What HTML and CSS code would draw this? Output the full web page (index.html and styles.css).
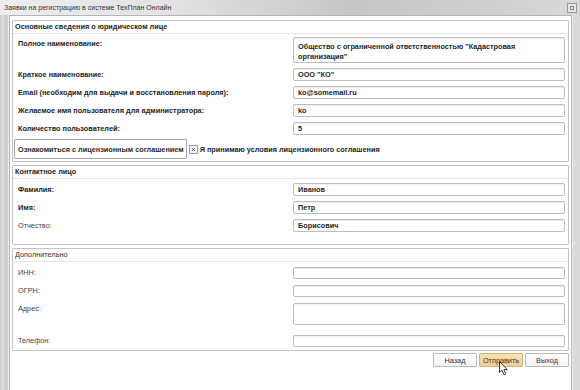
FILE: index.html
```html
<!DOCTYPE html>
<html lang="ru">
<head>
  <meta charset="UTF-8">
  <title>Заявки на регистрацию в системе ТехПлан Онлайн</title>
  <link rel="stylesheet" href="styles.css">
</head>
<body>
  <div class="window">
    <div class="titlebar">
      <span class="title">Заявки на регистрацию в системе ТехПлан Онлайн</span>
      <span class="tb-button"><span class="tb-button-inner"></span></span>
    </div>

    <div class="client">
      <!-- Основные сведения -->
      <section class="fs">
        <div class="fs-head">Основные сведения о юридическом лице</div>
        <div class="fs-body fs-body-main">
          <label class="lbl">Полное наименование:</label>
          <textarea class="field field-area" rows="2">Общество с ограниченной ответственностью "Кадастровая организация"</textarea>

          <label class="lbl">Краткое наименование:</label>
          <input class="field" type="text" value='ООО "КО"'>

          <label class="lbl">Email (необходим для выдачи и восстановления пароля):</label>
          <input class="field" type="text" value="ko@somemail.ru">

          <label class="lbl">Желаемое имя пользователя для администратора:</label>
          <input class="field" type="text" value="ko">

          <label class="lbl">Количество пользователей:</label>
          <input class="field" type="text" value="5">
        </div>
        <div class="license">
          <button class="license-button">Ознакомиться с лицензионным соглашением</button>
          <span class="check">
            <svg viewBox="0 0 9 9" width="9" height="9">
              <path d="M2.5 2.5L6.5 6.5M6.5 2.5L2.5 6.5" stroke="#555" stroke-width="1.1" fill="none"/>
            </svg>
          </span>
          <span class="check-label">Я принимаю условия лицензионного соглашения</span>
        </div>
      </section>

      <!-- Контактное лицо -->
      <section class="fs">
        <div class="fs-head">Контактное лицо</div>
        <div class="fs-body fs-body-contact">
          <label class="lbl">Фамилия:</label>
          <input class="field" type="text" value="Иванов">

          <label class="lbl">Имя:</label>
          <input class="field" type="text" value="Петр">

          <label class="lbl lbl-plain">Отчество:</label>
          <input class="field" type="text" value="Борисович">
        </div>
      </section>

      <!-- Дополнительно -->
      <section class="fs fs-last">
        <div class="fs-head fs-head-plain">Дополнительно</div>
        <div class="fs-body fs-body-extra">
          <label class="lbl lbl-plain">ИНН:</label>
          <input class="field field-small" type="text" value="">

          <label class="lbl lbl-plain">ОГРН:</label>
          <input class="field field-small" type="text" value="">

          <label class="lbl lbl-plain">Адрес:</label>
          <textarea class="field field-address"></textarea>

          <label class="lbl lbl-plain row-phone">Телефон:</label>
          <input class="field field-small row-phone" type="text" value="">
        </div>
      </section>

      <div class="actions">
        <button class="btn">Назад</button>
        <button class="btn btn-hover">Отправить</button>
        <button class="btn">Выход</button>
      </div>
    </div>

    <!-- курсор над кнопкой -->
    <svg class="cursor" viewBox="0 0 10 15" width="10" height="15">
      <path d="M0.5 0.5L0.5 11.5L3 9.2L5 13.8L6.8 13L4.9 8.6L8.3 8.6Z" fill="#fff" stroke="#222" stroke-width="0.9" stroke-linejoin="round"/>
    </svg>
  </div>
</body>
</html>
```

FILE: styles.css
```css
/* Базовые стили */
* {
  margin: 0;
  padding: 0;
  box-sizing: border-box;
}

body {
  font-family: "Liberation Sans", Arial, sans-serif;
  font-size: 7.3px;
  color: #222222;
  background-color: #d6d6d6;
}

/* Окно */
.window {
  position: relative;
  width: 580px;
  height: 390px;
  display: flex;
  flex-direction: column;
  background: linear-gradient(to right, #cfcfcf 0, #dedede 3px, #c9c9c9 6px, #d9d9d9 9px);
  overflow: hidden;
}

.titlebar {
  height: 15px;
  display: flex;
  align-items: center;
  justify-content: space-between;
  padding: 0 3px 0 4px;
  background: linear-gradient(to right, #eeeeee 0%, #e2e2e2 30%, #c6c6c6 60%, #cfcfcf 85%, #d8d8d8 100%);
}

.title {
  font-size: 7px;
  color: #333333;
}

.tb-button {
  width: 10px;
  height: 10px;
  border: 1px solid #9a9a9a;
  background: #e4e4e4;
  display: flex;
  align-items: center;
  justify-content: center;
}

.tb-button-inner {
  width: 4px;
  height: 4px;
  border: 1px solid #8a8a8a;
}

.client {
  flex: 1;
  margin: 0 8px 0 9px;
  padding: 4px 2px 0 2px;
  background-color: #ffffff;
  border: 1px solid #b5b5b5;
  border-bottom: none;
  box-shadow: 1px 0 0 #ededed, -1px 0 0 #ededed;
}

/* Группы полей */
.fs {
  border: 1px solid #c4c4c4;
  border-radius: 1px;
  margin-bottom: 3px;
}

.fs-last {
  margin-bottom: 2px;
}

.fs-head {
  height: 13px;
  line-height: 12px;
  padding-left: 2px;
  font-weight: bold;
  color: #1e1e1e;
  border-bottom: 1px solid #e6e6e6;
}

.fs-head-plain {
  font-weight: normal;
  color: #333333;
}

.fs-body {
  display: grid;
  grid-template-columns: 275px 1fr;
  padding: 3px 3px 2px 5px;
}

.fs-body-main {
  row-gap: 5px;
}

.fs-body-contact {
  row-gap: 5px;
  padding-top: 4px;
  padding-bottom: 12px;
}

.fs-body-extra {
  row-gap: 6px;
  padding-top: 5px;
  padding-bottom: 3px;
}

.lbl {
  font-weight: bold;
  line-height: 13px;
  color: #1e1e1e;
  align-self: start;
}

.lbl-plain {
  font-weight: normal;
  color: #444444;
}

.fs-body-extra .lbl {
  line-height: 12px;
}

.row-phone {
  margin-top: 4px;
}

/* Поля ввода */
.field {
  display: block;
  width: 100%;
  height: 13px;
  padding: 0 4px;
  font-family: inherit;
  font-size: 7.3px;
  font-weight: bold;
  color: #1e1e1e;
  background-color: #ffffff;
  border: 1px solid #bdbdbd;
  border-radius: 2px;
  box-shadow: inset 0 1px 0 #f0f0f0;
  outline: none;
}

.field-small {
  height: 12px;
}

.field-area {
  height: 26px;
  padding: 4px 4px 0;
  line-height: 10px;
  resize: none;
  overflow: hidden;
}

.field-address {
  height: 22px;
  resize: none;
  overflow: hidden;
}

/* Лицензионное соглашение */
.license {
  display: flex;
  align-items: center;
  margin-top: 2px;
  padding: 0 0 2px 1px;
}

.license-button {
  height: 20px;
  padding: 0 2px 0 3px;
  font-family: inherit;
  font-size: 7.3px;
  font-weight: bold;
  color: #2a2a2a;
  background-color: #ffffff;
  border: 1px solid #a8a8a8;
  border-radius: 1px;
}

.check {
  width: 9px;
  height: 9px;
  margin: 0 2px;
  border: 1px solid #9c9c9c;
  background-color: #f4f4f4;
  display: flex;
}

.check svg {
  width: 7px;
  height: 7px;
}

.check-label {
  font-weight: bold;
  color: #1e1e1e;
}

/* Кнопки */
.actions {
  display: flex;
  justify-content: flex-end;
  gap: 2px;
}

.btn {
  width: 44px;
  height: 14px;
  font-family: inherit;
  font-size: 7.3px;
  color: #333333;
  background: linear-gradient(#ffffff, #f3f3f3);
  border: 1px solid #b9b9b9;
  border-radius: 1px;
}

.btn-hover {
  background: linear-gradient(#f8e2b4, #efcf92);
  border-color: #d2b57a;
}

.cursor {
  position: absolute;
  left: 499px;
  top: 361px;
}
```
